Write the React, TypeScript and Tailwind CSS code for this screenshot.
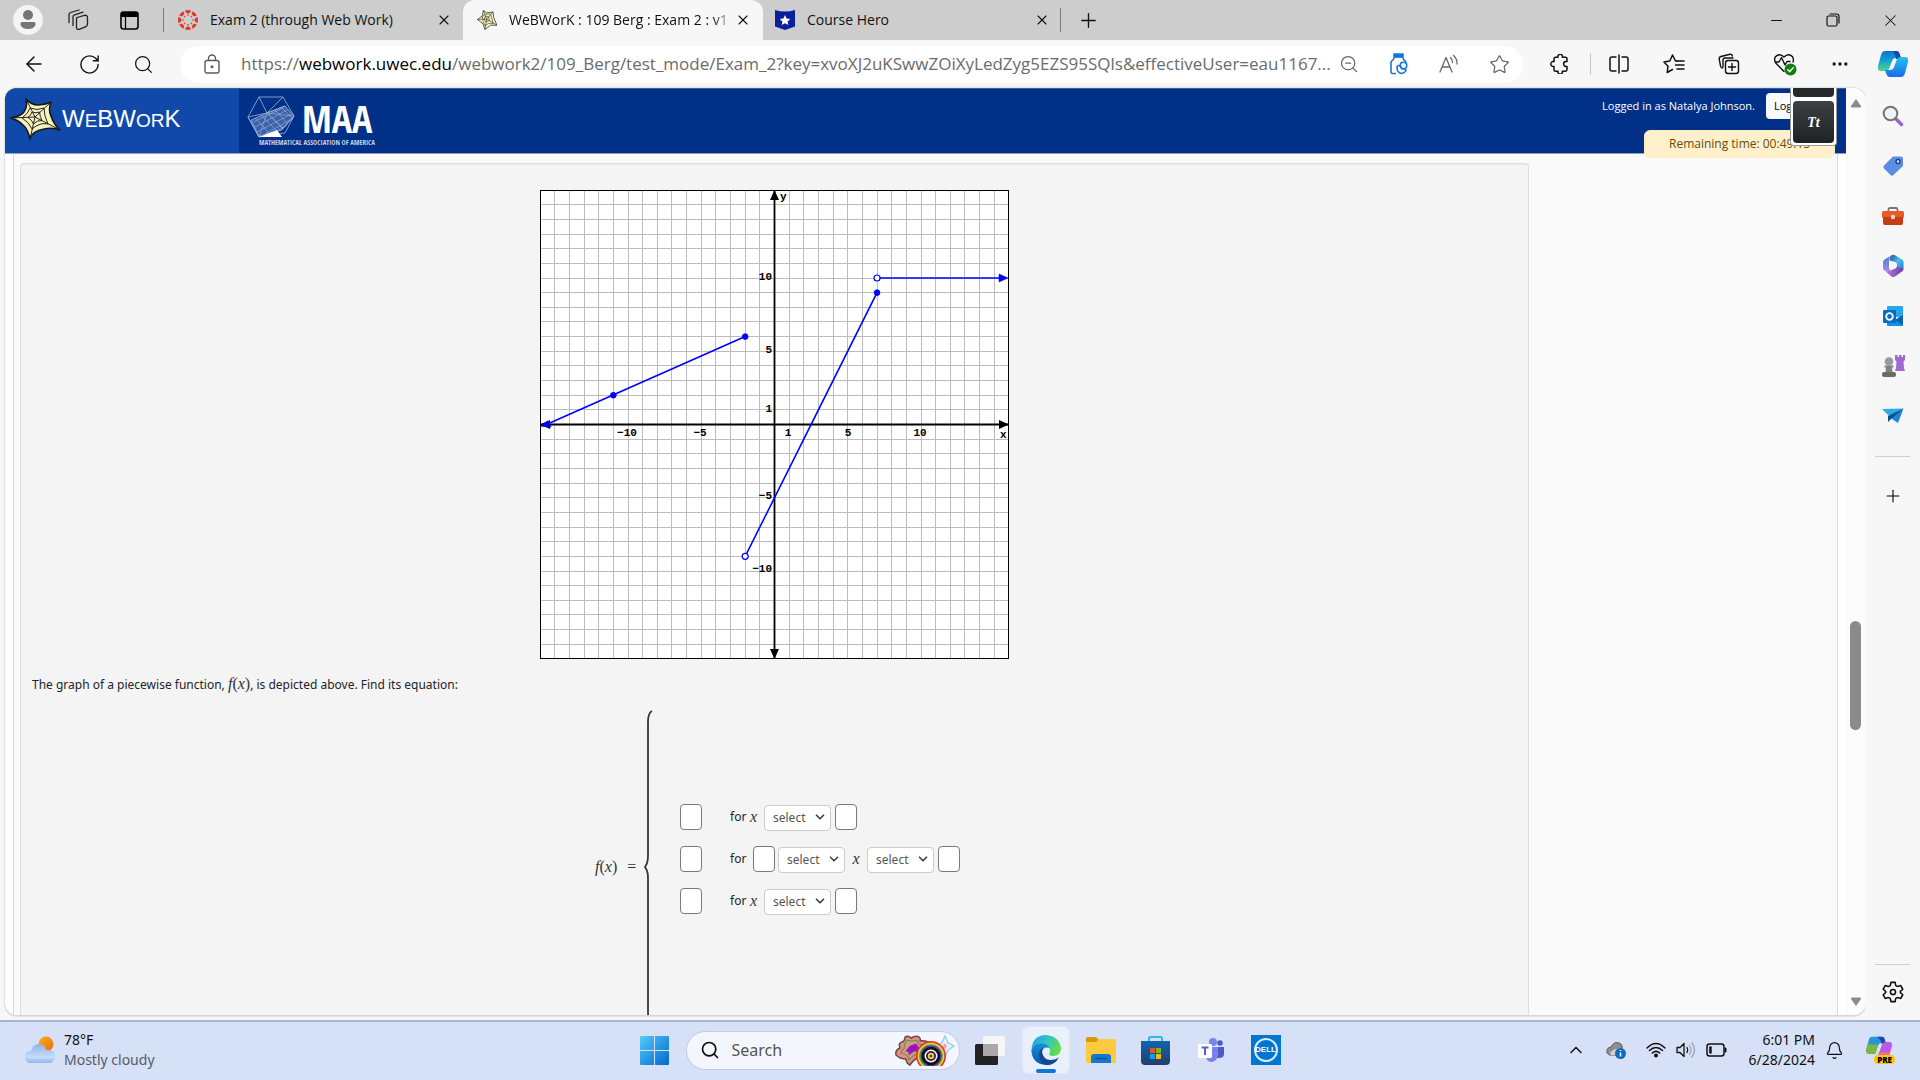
import React from "react";
import {
  ArrowLeft,
  RotateCw,
  Search,
  X,
  Plus,
  Minus,
  ZoomOut,
  Star,
  Ellipsis,
  ChevronUp,
  ChevronDown,
  Bell,
} from "lucide-react";

/* ---------- small drawings ---------- */

function WebStar({ size }: { size: number }) {
  return (
    <svg width={size} height={size} viewBox="0 0 50 42" preserveAspectRatio="none" className="shrink-0" aria-hidden="true">
      <path d="M1 20 L13 13 L16 1 L24 6 L40 4 L42 17 L50 32 L34 32 L20 41 L15 29 Z" fill="#f8f3bd" stroke="#1c1c1c" strokeWidth="1.6" strokeLinejoin="round" />
      <path
        d="M1 20 L24 19 L16 1 M24 19 L40 4 M24 19 L50 32 M24 19 L20 41 M13 14 L21 9 L33 8 L38 20 L40 29 L29 28 L20 33 L16 26 Z M18 19 L21 13 L29 14 L31 22 L22 25 Z"
        fill="none"
        stroke="#2a2a2a"
        strokeWidth="1.3"
        strokeLinejoin="round"
      />
    </svg>
  );
}

function WorkspacesIcon() {
  return (
    <svg width="22" height="22" viewBox="0 0 22 22" fill="none" stroke="#222" strokeWidth="1.3" strokeLinejoin="round" strokeLinecap="round" aria-hidden="true">
      <path d="M10 8.5 L17.5 6.3 Q20.5 6 20.5 9 V15 Q20.5 17 18.5 17.8 L12 20.3 Q9.5 21 9.5 18.5 V10 Q9.5 9 10 8.5Z" />
      <path d="M6 16.5 V8 Q6 6.4 7.5 5.8 L16 3.2" />
      <path d="M2 13.5 V6 Q2 4 3.5 3.5 L12 1" />
    </svg>
  );
}

function TabActionsIcon() {
  return (
    <svg width="19" height="19" viewBox="0 0 19 19" aria-hidden="true">
      <rect x="1" y="1" width="17" height="17" rx="2.5" fill="none" stroke="#000" strokeWidth="1.6" />
      <path d="M1 3 Q1 1 3 1 H16 Q18 1 18 3 V6 H1Z" fill="#000" />
      <path d="M5.5 6 V18" stroke="#000" strokeWidth="1.3" />
    </svg>
  );
}

const canvasAngles = [0, 45, 90, 135, 180, 225, 270, 315];

function CanvasIcon() {
  return (
    <svg width="20" height="20" viewBox="-10 -10 20 20" aria-hidden="true">
      {canvasAngles.map((a) => (
        <g key={a} transform={`rotate(${a})`} fill="#e2372b">
          <path d="M-3 -9.5 Q0 -10.4 3 -9.5 Q2.4 -6.6 0 -6.6 Q-2.4 -6.6 -3 -9.5Z" />
          <circle cx="0" cy="-4.9" r="0.8" />
        </g>
      ))}
    </svg>
  );
}

function CourseHeroIcon() {
  return (
    <svg width="20" height="20" viewBox="0 0 20 20" aria-hidden="true">
      <path d="M0 0 Q10 3 20 0 V16.5 L10 20 L0 16.5Z" fill="#0a1f9c" />
      <path d="M10 5 L11.6 8.4 L15.3 8.9 L12.6 11.4 L13.3 15 L10 13.2 L6.7 15 L7.4 11.4 L4.7 8.9 L8.4 8.4Z" fill="#fff" />
    </svg>
  );
}

function RestoreIcon() {
  return (
    <svg width="14" height="14" viewBox="0 0 14 14" fill="none" stroke="#111" strokeWidth="1.2" aria-hidden="true">
      <rect x="1" y="3" width="10" height="10" rx="1.5" />
      <path d="M3.5 1 H10.5 Q13 1 13 3.5 V10.5" />
    </svg>
  );
}

function LockIcon() {
  return (
    <svg width="16" height="20" viewBox="0 0 16 20" fill="none" stroke="#5c5c5c" strokeWidth="1.4" className="shrink-0" aria-hidden="true">
      <rect x="1" y="6.5" width="14" height="12.5" rx="2" />
      <path d="M4.5 6.5 V4.5 A3.5 3.5 0 0 1 11.5 4.5 V6.5" />
      <circle cx="8" cy="12.8" r="0.8" fill="#5c5c5c" />
    </svg>
  );
}

function ShoppingJarIcon() {
  return (
    <svg width="20" height="22" viewBox="0 0 20 22" fill="none" stroke="#1778d2" strokeWidth="1.6" strokeLinejoin="round" aria-hidden="true">
      <rect x="5" y="1" width="9" height="2.600" fill="#1778d2" />
      <path d="M7 20.500 H3.500 Q2 20.500 2 19 V9.500 Q2 8 4 7 L5.500 4 H13.500 L15 7 Q17 8 17 9.500" />
      <circle cx="14.500" cy="12.500" r="3.300" />
      <path d="M8 14.500 Q8 12.500 10 12.500 Q12 12.500 12.500 14.500 M12.500 16 Q15.500 15 17 17 Q17 19 13 20.500 Q8 20 8 14.500" />
    </svg>
  );
}

function ReadAloudIcon() {
  return (
    <svg width="20" height="20" viewBox="0 0 20 20" fill="none" stroke="#666" strokeWidth="1.3" strokeLinecap="round" strokeLinejoin="round" aria-hidden="true">
      <path d="M1 18 L7 3.5 L13 18 M3.2 13 H10.8" />
      <path d="M11.5 3.5 Q13.5 5.5 13.5 8.5 M14.5 1.5 Q18.5 5 18 10" />
    </svg>
  );
}

function PuzzleIcon() {
  return (
    <svg width="20" height="20" viewBox="0 0 20 20" fill="none" stroke="#111" strokeWidth="1.5" strokeLinejoin="round" aria-hidden="true">
      <path d="M5.500 3.200 H8 A2.300 2.300 0 1 1 12.400 3.200 H15.500 Q17 3.200 17 4.700 V7.600 H16 A2.400 2.400 0 0 0 16 12.400 H17 V15.600 Q17 17.200 15.500 17.200 H12.400 A2.300 2.300 0 1 1 8 17.200 H5.500 Q4 17.200 4 15.700 V12.400 A2.500 2.500 0 1 1 4 7.600 V4.700 Q4 3.200 5.500 3.200Z" />
    </svg>
  );
}

function SplitIcon() {
  return (
    <svg width="20" height="20" viewBox="0 0 20 20" fill="none" stroke="#111" strokeWidth="1.5" aria-hidden="true">
      <path d="M7.5 3 H3 Q1 3 1 5 V15 Q1 17 3 17 H7.5 M12.5 3 H17 Q19 3 19 5 V15 Q19 17 17 17 H12.5 M10 0.5 V19.5" />
    </svg>
  );
}

function FavoritesIcon() {
  return (
    <svg width="22" height="20" viewBox="0 0 22 20" fill="none" stroke="#111" strokeWidth="1.5" strokeLinejoin="round" strokeLinecap="round" aria-hidden="true">
      <path d="M14 7 H12.5 L9.5 1 L6.8 7 L1 8 L5 12.2 L4.2 18.5 L9.5 15.5" />
      <path d="M14 7 H21 M12.5 11 H21 M14 15 H21" />
    </svg>
  );
}

function CollectionsIcon() {
  return (
    <svg width="22" height="22" viewBox="0 0 22 22" fill="none" stroke="#111" strokeWidth="1.4" strokeLinejoin="round" strokeLinecap="round" aria-hidden="true">
      <path d="M4.5 15 Q3 15 2.6 13.4 L1.2 6 Q1 4 3 3.5 L12 1.3 Q14 1 14.4 3" />
      <path d="M5 14 V7 Q5 5 7 5 H15" />
      <rect x="7.5" y="7.5" width="13" height="13" rx="2.5" />
      <path d="M14 10.5 V17.5 M10.5 14 H17.5" />
    </svg>
  );
}

function HealthIcon() {
  return (
    <svg width="24" height="24" viewBox="0 0 24 24" fill="none" strokeLinecap="round" strokeLinejoin="round" aria-hidden="true">
      <path d="M11 19.5 L3 11.3 Q0.5 8 2.4 4.8 Q6.5 0.5 11 5 Q15.5 0.5 19.6 4.8 Q21 7.4 20 10" stroke="#111" strokeWidth="1.4" />
      <path d="M2.5 10 H6 L8.5 5.5 L12 13 L14 9.5 H17" stroke="#111" strokeWidth="1.4" />
      <circle cx="17.5" cy="17.5" r="6" fill="#117c10" />
      <path d="M14.8 17.8 L16.8 19.6 L20.2 15.8" stroke="#fff" strokeWidth="1.5" />
    </svg>
  );
}

function CopilotIcon() {
  return (
    <svg width="32" height="28" viewBox="0 0 32 28" aria-hidden="true">
      <defs>
        <linearGradient id="cpA" x1="0" y1="0" x2="0" y2="1">
          <stop offset="0" stopColor="#1272d3" />
          <stop offset=".5" stopColor="#10a5cf" />
          <stop offset="1" stopColor="#56d68d" />
        </linearGradient>
        <linearGradient id="cpB" x1="0" y1="0" x2="0" y2="1">
          <stop offset="0" stopColor="#22c3f3" />
          <stop offset="1" stopColor="#1b6be8" />
        </linearGradient>
      </defs>
      <path d="M8 1 H19 Q22 1 23 5 L24 8 H19 Q16 8 15 11 L12 19 Q11 21 8 21 H4 Q0 21 1 16 L4 5 Q5 1 8 1Z" fill="url(#cpA)" />
      <path d="M16 1 H20 Q22 1 23 5 L24 9 H19 Q18 4 16 1Z" fill="#1747b8" />
      <path d="M24 27 H13 Q10 27 9 23 L8 20 H13 Q16 20 17 17 L20 9 Q21 7 24 7 H28 Q32 7 31 12 L28 23 Q27 27 24 27Z" fill="url(#cpB)" />
    </svg>
  );
}

/* ---------- side bar drawings ---------- */

function SideSearch() {
  return (
    <svg width="22" height="22" viewBox="0 0 22 22" fill="none" aria-hidden="true">
      <path d="M14 14 L19.5 19.5" stroke="#9b5fd0" strokeWidth="3.5" strokeLinecap="round" />
      <circle cx="8.5" cy="8.5" r="6.8" stroke="#757575" strokeWidth="2" fill="#eef3f5" />
    </svg>
  );
}
function SideTag() {
  return (
    <svg width="22" height="22" viewBox="0 0 22 22" aria-hidden="true">
      <path d="M11 1.5 H19 Q21 1.5 21 3.5 V11 L11.5 20 Q10 21.3 8.5 20 L2 13.5 Q.6 12 2 10.4Z" fill="#5b8de0" />
      <circle cx="16" cy="6.5" r="2" fill="#dfe9fb" stroke="#1e3f8c" strokeWidth="1.4" />
    </svg>
  );
}
function SideToolbox() {
  return (
    <svg width="24" height="20" viewBox="0 0 24 20" aria-hidden="true">
      <path d="M7.500 6 V3.500 Q7.500 2 9 2 H15 Q16.500 2 16.500 3.500 V6" fill="none" stroke="#777" strokeWidth="1.8" />
      <rect x="1" y="5" width="22" height="7" rx="1.500" fill="#ea5a25" />
      <path d="M2 11 H22 V17 Q22 19 20 19 H4 Q2 19 2 17Z" fill="#c73c12" />
      <circle cx="12" cy="11" r="2.200" fill="#e4ddd8" />
    </svg>
  );
}
function SideM365() {
  return (
    <svg width="22" height="24" viewBox="0 0 22 24" aria-hidden="true">
      <defs>
        <linearGradient id="mA" x1="0" y1="0" x2="0" y2="1"><stop offset="0" stopColor="#3b7fe0" /><stop offset="1" stopColor="#b58bea" /></linearGradient>
        <linearGradient id="mB" x1="0" y1="0" x2="1" y2="1"><stop offset="0" stopColor="#2b3f9e" /><stop offset=".5" stopColor="#42c0ee" /><stop offset="1" stopColor="#2f74d6" /></linearGradient>
        <linearGradient id="mC" x1="0" y1="0" x2="1" y2="0"><stop offset="0" stopColor="#b77de8" /><stop offset="1" stopColor="#6a3fa0" /></linearGradient>
      </defs>
      <path d="M10 1 Q7 2.500 7 6 V13 Q7 16 10 17.500 L7 19 L2.500 16.500 Q1 15.500 1 14 V8 Q1 6.500 2.500 5.500Z" fill="url(#mA)" />
      <path d="M10 1 Q11.500 .500 13 1.300 L20 5.500 Q21.500 6.500 21.500 8 V13 Q21 15.500 18.500 16 L15 14 V11 Q15 9 13 8 L7.500 6.500 Q7.500 2.500 10 1Z" fill="url(#mB)" />
      <path d="M21.500 13 V15 Q21.500 16.500 20 17.500 L13 22.500 Q11 23.500 9.500 22.500 L3 17 Q5 18.300 7 17.300 L13 14.500 Q15 13.500 15 11.500 Q19 16 21.500 13Z" fill="url(#mC)" />
      <circle cx="11" cy="11.500" r="3.600" fill="#f7f7f7" />
    </svg>
  );
}
function SideOutlook() {
  return (
    <svg width="22" height="22" viewBox="0 0 22 22" aria-hidden="true">
      <rect x="5" y="1" width="16" height="11" rx="1" fill="#28a8ea" />
      <path d="M5 10 L13 15 L21 10 V20 Q21 21 20 21 H6 Q5 21 5 20Z" fill="#1490df" />
      <path d="M21 10 L13 15 L21 20.500Z" fill="#0b64b5" />
      <rect x="1" y="5" width="13" height="13" rx="1.200" fill="#0a6cc4" />
      <circle cx="7.500" cy="11.500" r="3.300" fill="none" stroke="#fff" strokeWidth="1.800" />
    </svg>
  );
}
function SideGames() {
  return (
    <svg width="24" height="24" viewBox="0 0 24 24" aria-hidden="true">
      <path d="M14 1 H16.500 V3 H18 V1 H20.500 V3 H22 V1 H24 V6 L22.500 7.500 L23 14 L24 17 H14 L15 14 L15.500 7.500 L14 6Z" fill="#a06bd0" />
      <circle cx="8" cy="7.500" r="4.300" fill="#9a9a9a" />
      <path d="M3.500 11.500 H12.500 V13.500 H11 L11.500 18 H4.500 L5 13.500 H3.500Z" fill="#828282" />
      <rect x="1" y="18" width="14" height="5" rx="2" fill="#6b6b6b" />
    </svg>
  );
}
function SideDrop() {
  return (
    <svg width="22" height="18" viewBox="0 0 22 18" aria-hidden="true">
      <path d="M0 2 L21.500 1.500 L8 10Z" fill="#2fa9e8" />
      <path d="M21.500 1.500 L16 16 L8.500 11Z" fill="#1a86d6" />
      <path d="M21.500 1.500 L6 9 V15 L9.500 11.500Z" fill="#0c4f91" />
    </svg>
  );
}
function GearIcon() {
  return (
    <svg width="22" height="22" viewBox="0 0 24 24" fill="none" stroke="#111" strokeWidth="1.700" strokeLinejoin="round" aria-hidden="true">
      <path d="M9.700 1.500 H14.300 L15 5 L17 6.100 L20.500 5 L22.700 9 L20 11.300 V12.700 L22.700 15 L20.500 19 L17 17.900 L15 19 L14.300 22.500 H9.700 L9 19 L7 17.900 L3.500 19 L1.300 15 L4 12.700 V11.300 L1.300 9 L3.500 5 L7 6.100 L9 5Z" />
      <circle cx="12" cy="12" r="2.800" />
    </svg>
  );
}

/* ---------- browser chrome ---------- */

function TitleBar() {
  return (
    <header className="flex h-10 shrink-0 items-center bg-[#cdcdcd] text-[14px] text-[#111]">
      <button aria-label="Profile" className="ml-[13px] flex size-[30px] items-center justify-center rounded-full bg-[#f4f4f4]">
        <svg width="16" height="20" viewBox="0 0 16 20" fill="#757575" aria-hidden="true">
          <circle cx="8" cy="5" r="5" />
          <path d="M2.500 12 H13.500 Q16 12 15.500 14.500 Q14 19 8 19 Q2 19 .500 14.500 Q0 12 2.500 12Z" />
        </svg>
      </button>
      <button aria-label="Workspaces" className="ml-6"><WorkspacesIcon /></button>
      <button aria-label="Tab actions" className="ml-[31px]"><TabActionsIcon /></button>
      <div className="ml-6 h-6 w-px bg-[#7d7d7d]" />
      <div className="ml-[14px] flex w-[285px] items-center">
        <CanvasIcon />
        <span className="ml-3 flex-1 pb-px whitespace-nowrap">Exam 2 (through Web Work)</span>
        <button aria-label="Close tab" className="mr-[11px]"><X size={16} strokeWidth={1.6} /></button>
      </div>
      <div className="flex h-10 w-[300px] items-center rounded-t-xl bg-[#f7f7f7] pl-[14px]">
        <WebStar size={20} />
        <span className="ml-3 flex-1 pb-px whitespace-nowrap [mask-image:linear-gradient(to_right,black_90%,transparent)]">
          WeBWorK : 109 Berg : Exam 2 : v1
        </span>
        <button aria-label="Close tab" className="mr-3"><X size={16} strokeWidth={1.6} /></button>
      </div>
      <div className="ml-3 flex w-[285px] items-center">
        <CourseHeroIcon />
        <span className="ml-3 flex-1 pb-px">Course Hero</span>
        <button aria-label="Close tab" className="mr-[10px]"><X size={16} strokeWidth={1.6} /></button>
      </div>
      <div className="h-6 w-px bg-[#7d7d7d]" />
      <button aria-label="New tab" className="ml-4"><Plus size={23} strokeWidth={1.4} /></button>
      <div className="ml-auto flex items-center gap-[41px] pr-5">
        <button aria-label="Minimize"><Minus size={17} strokeWidth={1.5} /></button>
        <button aria-label="Restore"><RestoreIcon /></button>
        <button aria-label="Close window"><X size={19} strokeWidth={1.3} /></button>
      </div>
    </header>
  );
}

function Toolbar() {
  return (
    <div className="flex h-12 shrink-0 items-center bg-[#f7f7f7] text-[#111]">
      <nav className="flex w-[180px] shrink-0 items-center gap-8 pl-[22px]">
        <button aria-label="Back"><ArrowLeft size={24} strokeWidth={1.5} /></button>
        <button aria-label="Refresh"><RotateCw size={23} strokeWidth={1.5} /></button>
        <button aria-label="Search"><Search size={21} strokeWidth={1.4} /></button>
      </nav>
      <div className="flex h-[37px] min-w-0 flex-1 items-center rounded-full bg-white pr-5 pl-6 text-[#666]">
        <LockIcon />
        <div className="ml-[21px] flex-1 whitespace-nowrap text-[17px] text-[#6b6b6b]">
          https://<span className="text-black">webwork.uwec.edu</span>/webwork2/109_Berg/test_mode/Exam_2?key=xvoXJ2uKSwwZOiXyLedZyg5EZS95SQls&amp;effectiveUser=eau1167...
        </div>
        <div className="ml-2 flex shrink-0 items-center gap-[30px]">
          <button aria-label="Zoom out"><ZoomOut size={20} strokeWidth={1.5} /></button>
          <button aria-label="Shopping"><ShoppingJarIcon /></button>
          <button aria-label="Read aloud"><ReadAloudIcon /></button>
          <button aria-label="Favorite"><Star size={21} strokeWidth={1.4} /></button>
        </div>
      </div>
      <div className="flex w-[397px] shrink-0 items-center pl-[27px]">
        <button aria-label="Extensions"><PuzzleIcon /></button>
        <div className="ml-5 h-[22px] w-px bg-[#c9c9c9]" />
        <button aria-label="Split screen" className="ml-[18px]"><SplitIcon /></button>
        <div className="ml-[34px] flex items-center gap-[33px]">
          <button aria-label="Favorites"><FavoritesIcon /></button>
          <button aria-label="Collections"><CollectionsIcon /></button>
          <button aria-label="Browser essentials"><HealthIcon /></button>
          <button aria-label="More"><Ellipsis size={20} strokeWidth={2} /></button>
        </div>
        <button aria-label="Copilot" className="ml-[27px]"><CopilotIcon /></button>
      </div>
    </div>
  );
}

function SideBar() {
  return (
    <aside className="flex w-[55px] shrink-0 flex-col items-center bg-[#f7f7f7] pt-[3px]">
      {[
        ["Search", <SideSearch />],
        ["Shopping", <SideTag />],
        ["Tools", <SideToolbox />],
        ["Microsoft 365", <SideM365 />],
        ["Outlook", <SideOutlook />],
        ["Games", <SideGames />],
        ["Drop", <SideDrop />],
      ].map(([name, icon]) => (
        <button key={name as string} aria-label={name as string} className="flex h-[50px] w-full items-center justify-center">
          {icon}
        </button>
      ))}
      <div className="mt-[15px] h-px w-[35px] bg-[#cfcfcf]" />
      <button aria-label="Customize" className="mt-[29px]"><Plus size={20} strokeWidth={1.3} /></button>
      <div className="mt-auto h-px w-[35px] bg-[#cfcfcf]" />
      <button aria-label="Settings" className="mt-4 mb-[17px]"><GearIcon /></button>
    </aside>
  );
}

/* ---------- page ---------- */

function MaaLogo() {
  return (
    <a href="#maa" aria-label="MAA" className="flex flex-col pl-2 text-white">
      <span className="flex h-[43px] items-center gap-[7px]">
        <svg width="48" height="42" viewBox="0 0 48 42" fill="none" stroke="#9db4dc" strokeWidth="0.8" aria-hidden="true">
          <path d="M12 1 H36 L47 20 L38 37 L12 41 L1 21Z M12 1 L20 17 L36 1 M1 21 L20 17 L47 20 M20 17 L36 32 L47 20 M1 21 L12 41 L20 17 L38 10" />
          <path d="M20 17 L38 10 L47 20 L35 34 L12 40 L4 24Z" fill="#6f8dc4" fillOpacity=".55" />
          <path d="M6 26 L36 12 M8 31 L40 14 M10 36 L44 18 M18 38 L45 23 M28 36 L40 29 M8 22 L22 37 M14 19 L30 35 M20 17 L36 33 M28 14 L41 28 M34 11 L46 23" strokeWidth=".6" />
          <path d="M12 41 L30 34 L35 41Z" fill="#fff" stroke="none" />
        </svg>
        <span className="pt-1 font-['Open_Sans_Condensed','Roboto_Condensed','Liberation_Sans',sans-serif] text-[38px] leading-[43px] font-bold">MAA</span>
      </span>
      <span className="pl-3 font-['Open_Sans_Condensed','Roboto_Condensed','Liberation_Sans',sans-serif] text-[7px] leading-[10px] whitespace-nowrap text-[#c5d0e6]">
        MATHEMATICAL ASSOCIATION OF AMERICA
      </span>
    </a>
  );
}

function PageHeader() {
  return (
    <div className="relative flex h-[66px] shrink-0 border-t border-b border-[#8f9fc0] border-t-[#3c5c9c] bg-[#003087]">
      <a href="#webwork" className="flex w-[234px] items-center bg-[#1149ab] pb-1 pl-[5px] text-white">
        <svg width="51" height="42" viewBox="0 0 51 42" aria-hidden="true">
          <path d="M1 20 Q11 18 14 14 Q18 8 16 1 Q21 7 28 7 Q35 7 41 4 Q38 11 41 18 Q44 27 50 32 Q42 29 34 31 Q22 33 20 41 Q18 31 13 27 Q8 22 1 20Z" fill="#f8f3bd" stroke="#151515" strokeWidth="1.600" strokeLinejoin="round" />
          <path d="M1 20 L25 19 L16 1 M25 19 L41 4 M25 19 L50 32 M25 19 L20 41 M12 20 Q18 16 20 10 Q27 13 34 10 Q34 18 38 26 Q30 24 22 31 Q19 24 12 20Z M18 19.500 Q21 17 22 14 Q26 15.500 29.500 14 Q30 19 32 22.500 Q27 22 23.500 26 Q22 22 18 19.500Z" fill="none" stroke="#222" strokeWidth="1" strokeLinejoin="round" />
        </svg>
        <span className="ml-px font-['Liberation_Sans',sans-serif] text-[24px] leading-none">
          W<span className="text-[19px]">E</span>BW<span className="text-[19px]">OR</span>K
        </span>
      </a>
      <div className="flex pt-[6px]"><MaaLogo /></div>
      <div className="mt-1 mr-[9px] ml-auto flex h-[26px] items-center text-[11px] text-white">
        <span>Logged in as Natalya Johnson.</span>
        <button className="ml-[11px] h-[26px] w-[71px] rounded bg-[#f8f9fa] pl-2 text-left text-[11px] text-black">Log Out</button>
      </div>
      <div className="absolute top-[41px] right-[11px] flex h-[28px] w-[191px] items-center rounded-md border border-[#ffecb5] bg-[#fff0cd] pl-6 text-[12px] text-[#664d03]">
        Remaining time: 00:49:15
      </div>
      <div className="absolute -top-px right-[9px] flex w-[47px] flex-col gap-1 rounded-b border border-t-0 border-[#999] bg-white px-[2px] pb-[2px]">
        <div className="h-[9px] rounded-b bg-[#26292c]" />
        <button className="h-[42px] rounded bg-linear-to-b from-[#3d4144] to-[#1f2225] font-['Liberation_Serif',serif] text-[14px] font-bold text-white italic">
          Tt
        </button>
      </div>
    </div>
  );
}

const CENTER = 234.5;
const UNIT = 14.65;
const px = (x: number) => CENTER + x * UNIT;
const py = (y: number) => CENTER - y * UNIT;
const ticks = Array.from({ length: 31 }, (_, i) => i - 15);
const xLabels: [string, number][] = [["−10", 87], ["−5", 160], ["1", 248], ["5", 308], ["10", 380]];
const yLabels: [string, number][] = [["10", 87], ["5", 160], ["1", 219], ["−5", 306], ["−10", 379]];

function Graph() {
  return (
    <svg width="469" height="469" viewBox="0 0 469 469" role="img" aria-label="Graph of a piecewise function">
      <rect width="469" height="469" fill="#fff" />
      <g stroke="#bcbcbc" strokeWidth="1" shapeRendering="crispEdges">
        {ticks.map((t) => (
          <React.Fragment key={t}>
            <line x1={px(t)} y1="0" x2={px(t)} y2="469" />
            <line x1="0" y1={py(t)} x2="469" y2={py(t)} />
          </React.Fragment>
        ))}
      </g>
      <path d="M234.500 0 V469 M0 234.500 H469" stroke="#000" strokeWidth="1.800" />
      <path d="M234.500 0 L239 10 H230Z M234.500 469 L239 459 H230Z M469 234.500 L459 230 V239Z M0 234.500 L10 230 V239Z" fill="#000" />
      <g fontFamily="'Liberation Mono', monospace" fontWeight="bold" fontSize="11" fill="#000">
        {xLabels.map(([s, x]) => (
          <text key={s} x={x} y="246" textAnchor="middle">{s}</text>
        ))}
        {yLabels.map(([s, y]) => (
          <text key={s} x="232" y={y + 3} textAnchor="end">{s}</text>
        ))}
        <text x="240" y="10">y</text>
        <text x="460" y="248">x</text>
      </g>
      <g stroke="#00f" strokeWidth="1.600" fill="#00f">
        <line x1="3" y1="236" x2={px(-2)} y2={py(6)} />
        <line x1={px(-2)} y1={py(-9)} x2={px(7)} y2={py(9)} />
        <line x1={px(7)} y1={py(10)} x2="466" y2={py(10)} />
        <path d="M1 236 L8 231 L11 237Z" strokeWidth="1" />
        <path d={`M468 ${py(10)} L459 ${py(10) - 4} V${py(10) + 4}Z`} strokeWidth="0.500" />
        <circle cx={px(-11)} cy={py(2)} r="2.800" strokeWidth="1" />
        <circle cx={px(-2)} cy={py(6)} r="2.800" strokeWidth="1" />
        <circle cx={px(7)} cy={py(9)} r="2.800" strokeWidth="1" />
        <circle cx={px(7)} cy={py(10)} r="3" strokeWidth="1.200" fill="#fff" />
        <circle cx={px(-2)} cy={py(-9)} r="3" strokeWidth="1.200" fill="#fff" />
      </g>
      <rect x="0.500" y="0.500" width="468" height="468" fill="none" stroke="#000" />
    </svg>
  );
}

function MathText({ children }: { children: React.ReactNode }) {
  return <span className="font-['Liberation_Serif',serif] text-[16px] text-[#333] italic">{children}</span>;
}

function Box({ label }: { label: string }) {
  return <input aria-label={label} className="h-[26px] w-[22px] rounded border border-[#7a7a7a] bg-white px-1" />;
}

function Relation({ label }: { label: string }) {
  return (
    <span className="relative mt-[2px] inline-flex">
      <select aria-label={label} defaultValue="select" className="h-[26px] w-[67px] appearance-none rounded border border-[#ccc] bg-white pl-2 text-[12px] text-[#555]">
        <option value="select">select</option>
      </select>
      <ChevronDown size={14} strokeWidth={3} className="pointer-events-none absolute top-[5px] right-1 text-[#444]" />
    </span>
  );
}

function SimpleCase({ n }: { n: number }) {
  return (
    <div className="flex h-[26px] items-center">
      <Box label={`Formula ${n}`} />
      <span className="ml-7 w-5">for</span>
      <span className="w-[14px]"><MathText>x</MathText></span>
      <Relation label={`Relation ${n}`} />
      <span className="ml-1 flex"><Box label={`Bound ${n}`} /></span>
    </div>
  );
}

function Equation() {
  return (
    <div className="mt-[13px] flex justify-center pl-[6px]">
      <span className="flex h-[314px] w-12 items-center gap-[10px] whitespace-nowrap">
        <MathText>f<span className="not-italic">(</span>x<span className="not-italic">)</span></MathText>
        <MathText><span className="not-italic">=</span></MathText>
      </span>
      <svg width="10" height="314" viewBox="0 0 10 314" className="shrink-0" fill="none" stroke="#33373b" strokeWidth="1.800" aria-hidden="true">
        <path d="M9 1 Q5 3 5 12 V146 Q5 153 2 157 Q5 161 5 168 V302 Q5 311 9 313" />
      </svg>
      <div className="flex flex-col gap-4 pt-[94px] pl-[27px] text-[12px] text-[#212529]">
        <SimpleCase n={1} />
        <div className="flex h-[26px] items-center">
          <Box label="Formula 2" />
          <span className="ml-7 w-[23px]">for</span>
          <Box label="Lower bound 2" />
          <span className="ml-[3px] flex"><Relation label="Lower relation 2" /></span>
          <span className="w-[22px] text-center"><MathText>x</MathText></span>
          <Relation label="Upper relation 2" />
          <span className="ml-1 flex"><Box label="Upper bound 2" /></span>
        </div>
        <SimpleCase n={3} />
      </div>
    </div>
  );
}

function Problem() {
  return (
    <div className="mt-[9px] mr-[308px] ml-[6px] flex-1 rounded-t border border-b-0 border-[#dedede] bg-[#f4f4f4] pt-[26px] font-['Noto_Sans',sans-serif] shadow-[inset_0_1px_1px_rgba(0,0,0,0.05)]">
      <div className="flex justify-center"><Graph /></div>
      <p className="mt-[13px] pl-[11px] text-[12px] leading-6 text-[#212529]">
        The graph of a piecewise function, <MathText>f<span className="not-italic">(</span>x<span className="not-italic">)</span></MathText>, is depicted above. Find its equation:
      </p>
      <Equation />
    </div>
  );
}

function ScrollBar() {
  return (
    <div className="flex w-[19px] shrink-0 flex-col items-center bg-[#fcfcfc] pt-[10px] pb-2" aria-hidden="true">
      <svg width="12" height="10" viewBox="0 0 12 10" fill="#8a8a8a"><path d="M6 1 L11 8 Q11.500 9.500 10 9.500 H2 Q.500 9.500 1 8Z" /></svg>
      <div className="flex-[520]" />
      <div className="h-[109px] w-[11px] rounded-full bg-[#8b8b8b]" />
      <div className="flex-[270]" />
      <svg width="12" height="10" viewBox="0 0 12 10" fill="#8a8a8a"><path d="M6 9 L11 2 Q11.500 .500 10 .500 H2 Q.500 .500 1 2Z" /></svg>
    </div>
  );
}

function Page() {
  return (
    <div className="mb-1 ml-[5px] flex min-w-0 flex-1 overflow-hidden rounded-xl border-b border-[#d6d6d6] bg-white shadow-[0_0_2px_rgba(0,0,0,0.3)]">
      <div className="flex min-w-0 flex-1 flex-col">
        <PageHeader />
        <main className="mx-2 flex min-h-0 flex-1 flex-col border-x border-[#d8d8d8] bg-[#fafafa]">
          <Problem />
        </main>
      </div>
      <ScrollBar />
    </div>
  );
}

/* ---------- taskbar ---------- */

function WeatherIcon() {
  return (
    <svg width="32" height="32" viewBox="0 0 32 32" aria-hidden="true">
      <defs>
        <linearGradient id="sun" x1="0" y1="0" x2="1" y2="1"><stop offset="0" stopColor="#f6b11c" /><stop offset="1" stopColor="#ee6b12" /></linearGradient>
        <linearGradient id="cloud" x1="0" y1="0" x2="0" y2="1"><stop offset="0" stopColor="#8fb2ee" /><stop offset=".7" stopColor="#c6dcf9" /><stop offset="1" stopColor="#8fb3ea" /></linearGradient>
      </defs>
      <circle cx="22" cy="10" r="7.500" fill="url(#sun)" />
      <path d="M7 29 Q1 29 1 23 Q1 17 7 17 Q9 10 15 10 Q21 10 22 16 Q31 15 31 22.500 Q31 29 25 29Z" fill="url(#cloud)" />
    </svg>
  );
}

function WindowsIcon() {
  return (
    <svg width="29" height="29" viewBox="0 0 29 29" aria-hidden="true">
      <defs><linearGradient id="win" x1="0" y1="0" x2="29" y2="29" gradientUnits="userSpaceOnUse"><stop offset="0" stopColor="#4fcbf8" /><stop offset="1" stopColor="#0568cb" /></linearGradient></defs>
      <path d="M0 1 Q0 0 1 0 H14 V14 H0Z M15 0 H28 Q29 0 29 1 V14 H15Z M0 15 H14 V29 H1 Q0 29 0 28Z M15 15 H29 V28 Q29 29 28 29 H15Z" fill="url(#win)" />
    </svg>
  );
}

function SearchArt() {
  return (
    <svg width="60" height="31" viewBox="0 0 60 31" aria-hidden="true">
      <path d="M50 1 L53 8 L59 11 L53 15 L50 22 L46 15 L41 11 L47 8Z" fill="#fbeef4" stroke="#8ed4f2" strokeWidth="1.500" />
      <path d="M50 8 L52 11 L50 15 L47 11Z" fill="#f3a3ad" />
      <g strokeLinejoin="round">
        <path d="M10 2 Q13 0 16 3 Q21 0 24 2 Q26 4 25 6 Q31 5 34 8 L30 14 L34 20 L24 22 Q19 24 15 30 Q11 28 11 24 Q5 24 1 20 Q0 15 5 13 Q3 8 7 7 Q10 6 10 2Z" fill="#ee8a80" stroke="#59504c" strokeWidth="1.500" />
        <path d="M12 5 Q16 7 22 5 Q22 10 28 10 L26 15 L28 19 L21 19 Q17 21 14 25 Q14 20 6 18 Q6 15 9 14 Q9 9 12 5Z" fill="#c9a07c" stroke="#6f8a5c" strokeWidth="1.200" />
        <path d="M15 11 L21 9 L24 13 L25 17 L19 16 L14 20 L14 17 L11 16Z" fill="#9a10c4" stroke="#b12ca0" strokeWidth="1" />
      </g>
      <g transform="translate(36 21)">
        <circle r="15" fill="#e33a32" /><circle r="13.300" fill="#f6d233" /><circle r="11.800" fill="#3faa50" /><circle r="10.500" fill="#6b2bb0" /><circle r="9.300" fill="#111" /><circle r="6.500" fill="#fff" /><circle r="5" fill="#27215f" /><circle r="3.200" fill="#f7c73c" /><circle r="1.300" fill="#5b2a83" />
      </g>
    </svg>
  );
}

function TaskViewIcon() {
  return (
    <svg width="30" height="29" viewBox="0 0 30 29" aria-hidden="true">
      <rect x="0" y="8" width="23" height="21" rx="1.500" fill="#232323" />
      <rect x="8" y="0" width="22" height="20" rx="1.500" fill="#f6f6f6" />
      <path d="M8 8 H23 V20 H8Z" fill="#a9a9a9" />
    </svg>
  );
}

function EdgeIcon() {
  return (
    <svg width="30" height="30" viewBox="0 0 30 30" aria-hidden="true">
      <defs>
        <linearGradient id="edA" x1="0" y1="0" x2="1" y2=".4"><stop offset="0" stopColor="#1b9de0" /><stop offset=".5" stopColor="#2cc3cf" /><stop offset="1" stopColor="#62dc50" /></linearGradient>
        <linearGradient id="edB" x1="0" y1="0" x2="0" y2="1"><stop offset="0" stopColor="#1690dc" /><stop offset="1" stopColor="#0d58ab" /></linearGradient>
      </defs>
      <path d="M.5 14 Q2 0 15 0 Q28 1 30 13 Q30 20 23 21 Q18 21 18 19 Q20 16 18 12 Q15 8 10 8 Q4 8 .5 14Z" fill="url(#edA)" />
      <path d="M.3 15 Q3 8 10 8 Q16 8 18.500 13 Q12 11 11 17 Q11 25 19 27 Q24 27 27 24 Q23 30 15 30 Q1 29 .3 15Z" fill="url(#edB)" />
      <path d="M11 17 Q12 24 19 25 Q25 25 28 22 Q24 30 16 30 Q8 28 8 20 Q8 15 12 12.500 Q11 15 11 17Z" fill="#114a8f" />
    </svg>
  );
}

function FolderIcon() {
  return (
    <svg width="30" height="26" viewBox="0 0 30 26" aria-hidden="true">
      <path d="M0 2 Q0 0 2 0 H9 Q11 0 12 2 L14 6 H0Z" fill="#d99a08" />
      <path d="M0 5 H10 L13 2 H28 Q30 2 30 4 V26 H2 Q0 26 0 24Z" fill="#fdca3f" />
      <path d="M5 26 V20 Q5 17 8 17 H22 Q25 17 25 20 V26Z" fill="#1578cd" />
      <path d="M10 21.500 H20" stroke="#0b4f93" strokeWidth="1.500" strokeLinecap="round" />
    </svg>
  );
}

function StoreIcon() {
  return (
    <svg width="29" height="29" viewBox="0 0 29 29" aria-hidden="true">
      <defs><linearGradient id="store" x1="0" y1="0" x2="0" y2="1"><stop offset="0" stopColor="#1065b3" /><stop offset="1" stopColor="#243c6c" /></linearGradient></defs>
      <path d="M8 6 V2.500 Q8 1 9.500 1 H19.500 Q21 1 21 2.500 V6" fill="none" stroke="#31b6ee" strokeWidth="2" />
      <path d="M0 5 H29 V25 Q29 29 25 29 H4 Q0 29 0 25Z" fill="url(#store)" />
      <path d="M9 12 H14 V17 H9Z" fill="#f25022" /><path d="M15 12 H20 V17 H15Z" fill="#7fba00" />
      <path d="M9 18 H14 V23 H9Z" fill="#00a4ef" /><path d="M15 18 H20 V23 H15Z" fill="#ffb900" />
    </svg>
  );
}

function TeamsIcon() {
  return (
    <svg width="28" height="24" viewBox="0 0 28 24" aria-hidden="true">
      <circle cx="23" cy="5" r="2.800" fill="#5059c9" />
      <circle cx="16" cy="4" r="4" fill="#7b83eb" />
      <path d="M20 9 H27 V16 Q27 20 22 20 H20Z" fill="#5059c9" />
      <path d="M9 9 H21 V17 Q20 24 14 24 Q9 23 9 18Z" fill="#7b83eb" />
      <rect x="1" y="6" width="14" height="14" rx="1" fill="#fff" />
      <path d="M4.500 9.500 H11.500 M8 9.500 V17" stroke="#5a5fc7" strokeWidth="2" />
    </svg>
  );
}

function DellIcon() {
  return (
    <span className="flex size-[30px] items-center justify-center bg-[#0076d3]">
      <span className="flex size-6 items-center justify-center rounded-full border-2 border-[#d9ecfb] font-['Liberation_Sans',sans-serif] text-[8px] leading-none font-bold text-white">DELL</span>
    </span>
  );
}

function CloudInfoIcon() {
  return (
    <svg width="20" height="18" viewBox="0 0 20 18" aria-hidden="true">
      <path d="M4 14 Q0 13 1 9 Q2 6 5 6 Q8 0 13 2 Q17 3 16 8 L10 14Z" fill="#8e8e8e" stroke="#5d5d5d" />
      <path d="M4 12 Q8 7 15 8 V12 L10 14 H5Z" fill="#d2d2d2" />
      <circle cx="14.500" cy="12.500" r="5.500" fill="#0f6cbd" />
      <path d="M14.500 11.500 V15.500 M14.500 9 V10" stroke="#fff" strokeWidth="1.500" />
    </svg>
  );
}

function WifiIcon() {
  return (
    <svg width="20" height="16" viewBox="0 0 20 16" fill="none" stroke="#111" strokeWidth="1.500" strokeLinecap="round" aria-hidden="true">
      <path d="M1 6 Q10 -3 19 6 M3.500 8.500 Q10 2.500 16.500 8.500 M6.300 11 Q10 7.800 13.700 11" />
      <circle cx="10" cy="13.500" r="1.200" fill="#111" />
    </svg>
  );
}

function VolumeIcon() {
  return (
    <svg width="20" height="16" viewBox="0 0 20 16" fill="none" stroke="#111" strokeWidth="1.300" strokeLinecap="round" strokeLinejoin="round" aria-hidden="true">
      <path d="M1 5.500 H4 L8 1.500 V14.500 L4 10.500 H1Z" />
      <path d="M11 5.500 Q12.500 8 11 10.500" />
      <path d="M13.500 3.500 Q16.500 8 13.500 12.500 M16 1 Q21 8 16 15" stroke="#9aa3b5" />
    </svg>
  );
}

function BatteryIcon() {
  return (
    <svg width="21" height="14" viewBox="0 0 21 14" aria-hidden="true">
      <rect x="1" y="1" width="17" height="12" rx="2.500" fill="none" stroke="#111" strokeWidth="1.500" />
      <rect x="3.200" y="3.200" width="2.500" height="7.600" rx="1" fill="#111" />
      <path d="M19 5 H20 V9 H19Z" fill="#111" stroke="#111" />
    </svg>
  );
}

function CopilotPreview() {
  return (
    <span className="relative block h-7 w-[30px]">
      <svg width="28" height="24" viewBox="0 0 32 28" aria-hidden="true">
        <path d="M8 1 H19 Q22 1 23 5 L24 8 H19 Q16 8 15 11 L12 19 H4 Q0 19 1 16 L4 5 Q5 1 8 1Z" fill="#2b93d6" />
        <path d="M3 10 H15 L12 21 H4 Q0 21 1 16Z" fill="#79b943" />
        <path d="M14 1 H20 Q22 1 23 5 L24 9 H19 Q18 4 14 1Z" fill="#1d45b5" />
        <path d="M24 27 H13 L17 17 L20 9 Q21 7 24 7 H28 Q32 7 31 12 L28 23 Q27 27 24 27Z" fill="#b85be0" />
        <path d="M24 27 H13 L16 19 H29 L28 23 Q27 27 24 27Z" fill="#f0707c" />
      </svg>
      <span className="absolute right-0 bottom-0 rounded-sm bg-[#fdc513] px-[3px] font-['Open_Sans',sans-serif] text-[8px] leading-[9px] font-extrabold text-black">PRE</span>
    </span>
  );
}

function Taskbar() {
  return (
    <footer className="grid h-[60px] shrink-0 grid-cols-[1fr_auto_1fr] items-center border-t-2 border-[#aab4c8] bg-[#d6e0f7] font-['Noto_Sans',sans-serif] text-[14px] text-[#111]">
      <div className="flex items-center gap-2 pb-[2px] pl-6">
        <WeatherIcon />
        <div className="leading-5">
          <div>78°F</div>
          <div className="text-[#555b66]">Mostly cloudy</div>
        </div>
      </div>
      <div className="flex items-center pb-[2px]">
        <button aria-label="Start"><WindowsIcon /></button>
        <div className="ml-[17px] flex h-[39px] w-[274px] items-center rounded-full border border-[#c3cbdd] bg-[#f3f6fd] pr-1 pl-[13px]">
          <Search size={20} strokeWidth={2} />
          <input aria-label="Search" placeholder="Search" className="ml-3 w-0 flex-1 bg-transparent text-[16px] placeholder:text-[#555]" />
          <SearchArt />
        </div>
        <button aria-label="Task view" className="ml-[15px]"><TaskViewIcon /></button>
        <button aria-label="Edge" className="relative ml-[17px] flex size-12 items-center justify-center rounded-md border border-[#dfe5f2] bg-[#eaf0fb]">
          <EdgeIcon />
          <span className="absolute bottom-0 h-1 w-5 rounded-full bg-[#0a78d4]" />
        </button>
        <button aria-label="File Explorer" className="ml-4"><FolderIcon /></button>
        <button aria-label="Store" className="ml-[25px]"><StoreIcon /></button>
        <button aria-label="Teams" className="ml-[27px]"><TeamsIcon /></button>
        <button aria-label="Dell" className="ml-[26px]"><DellIcon /></button>
      </div>
      <div className="flex items-center justify-end pr-[25px] pb-[2px]">
        <button aria-label="Hidden icons"><ChevronUp size={20} strokeWidth={1.8} /></button>
        <span className="ml-5"><CloudInfoIcon /></span>
        <span className="ml-5"><WifiIcon /></span>
        <span className="ml-[10px]"><VolumeIcon /></span>
        <span className="ml-[10px]"><BatteryIcon /></span>
        <div className="ml-[22px] text-right leading-5">
          <div>6:01 PM</div>
          <div>6/28/2024</div>
        </div>
        <button aria-label="Notifications" className="ml-[10px]"><Bell size={19} strokeWidth={1.5} /></button>
        <button aria-label="Copilot preview" className="ml-[21px]"><CopilotPreview /></button>
      </div>
    </footer>
  );
}

export default function App() {
  return (
    <div className="flex h-screen flex-col overflow-hidden bg-[#f7f7f7] font-['Open_Sans','Noto_Sans',sans-serif]">
      <TitleBar />
      <Toolbar />
      <div className="flex min-h-0 flex-1">
        <Page />
        <SideBar />
      </div>
      <Taskbar />
    </div>
  );
}
